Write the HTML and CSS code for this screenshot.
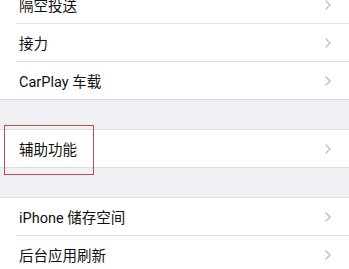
FILE: index.html
```html
<!DOCTYPE html>
<html lang="zh-CN">
<head>
<meta charset="utf-8">
<link rel="stylesheet" href="styles.css">
</head>
<body>
<div class="page">
  <div class="group first">
    <div class="row"><span class="label">隔空投送</span><svg class="chev" viewBox="0 0 8 12"><polyline points="1.5,1.5 6,6 1.5,10.5"/></svg></div>
    <div class="row"><span class="label">接力</span><svg class="chev" viewBox="0 0 8 12"><polyline points="1.5,1.5 6,6 1.5,10.5"/></svg></div>
    <div class="row"><span class="label">CarPlay 车载</span><svg class="chev" viewBox="0 0 8 12"><polyline points="1.5,1.5 6,6 1.5,10.5"/></svg></div>
  </div>
  <div class="group">
    <div class="row"><span class="label">辅助功能</span><svg class="chev" viewBox="0 0 8 12"><polyline points="1.5,1.5 6,6 1.5,10.5"/></svg></div>
    <div class="highlight"></div>
  </div>
  <div class="group">
    <div class="row"><span class="label">iPhone 储存空间</span><svg class="chev" viewBox="0 0 8 12"><polyline points="1.5,1.5 6,6 1.5,10.5"/></svg></div>
    <div class="row"><span class="label">后台应用刷新</span><svg class="chev" viewBox="0 0 8 12"><polyline points="1.5,1.5 6,6 1.5,10.5"/></svg></div>
  </div>
</div>
</body>
</html>
```
FILE: styles.css
```css
html, body {
  margin: 0;
  padding: 0;
  background: #efeff4;
  overflow: hidden;
}
.page {
  display: flex;
  flex-direction: column;
  gap: 29px;
  font-family: Roboto, "Noto Sans CJK SC", sans-serif;
  font-size: 14.5px;
  color: #111;
}
.group {
  position: relative;
  background: #fff;
  border-top: 1px solid #e0e0e4;
  border-bottom: 1px solid #dcdce0;
}
.group.first {
  margin-top: -15px;
}
.row {
  height: 37px;
  display: flex;
  align-items: center;
  justify-content: space-between;
  padding-left: 19px;
  padding-right: 17px;
  position: relative;
}
.row + .row {
  border-top: 1px solid #e2e2e6;
  margin-left: 16px;
  padding-left: 3px;
}
.chev {
  width: 8px;
  height: 12px;
  fill: none;
  stroke: #c4c4c8;
  stroke-width: 1.5;
}
.highlight {
  position: absolute;
  left: 4px;
  top: -5px;
  width: 88px;
  height: 48px;
  border: 1px solid #c94a4c;
}
```
